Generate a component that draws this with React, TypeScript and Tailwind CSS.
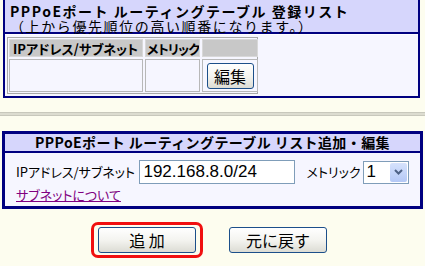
import React from 'react';

const jp = { fontFamily: '"Noto Sans CJK JP", "Liberation Sans", sans-serif' };
const sans = { fontFamily: '"Liberation Sans", sans-serif' };

function XpButton({ label, className = '' }: { label: string; className?: string }) {
  return (
    <button
      className={`flex items-center justify-center rounded-[3px] border border-[#1c4f8a] bg-gradient-to-b from-[#ffffff] via-[#f4f4f0] to-[#dcdcd4] text-[16px] leading-none text-black ${className}`}
      style={jp}
    >
      {label}
    </button>
  );
}

function ListPanel() {
  return (
    <div className="ml-[3px] mr-[5px] border-2 border-t-0 border-[#000080] bg-white">
      <div className="h-[34px] border-b-2 border-[#000080] bg-[#d6d6fc] px-[5px] pt-[4px] leading-[15px] whitespace-nowrap">
        <div className="text-[14px] font-bold tracking-[1.5px] text-black">PPPoEポート ルーティングテーブル 登録リスト</div>
        <div className="text-[14px] tracking-[1.6px] text-black">（上から優先順位の高い順番になります。）</div>
      </div>
      <div className="border-t border-white bg-[#f6f6ff] px-[2px] py-[2px]">
        <div className="w-[251px] border border-[#a8a8a8] p-[1px]">
          <div className="grid grid-cols-[134px_55px_56px] gap-[2px] whitespace-nowrap [font-feature-settings:'palt']">
            <div className="h-[18px] overflow-hidden border border-[#d8d8d8] bg-[#c8c8c8] px-[3px] text-[13px] font-bold leading-[17px]">IPアドレス/サブネット</div>
            <div className="h-[18px] overflow-hidden border border-[#d8d8d8] bg-[#c8c8c8] pl-[1px] text-[13px] font-bold leading-[17px] tracking-[-0.8px]">メトリック</div>
            <div className="h-[18px] border border-[#d8d8d8] bg-[#c8c8c8]" />
            <div className="h-[33px] border border-[#b8b8b8]" />
            <div className="h-[33px] border border-[#b8b8b8]" />
            <div className="flex h-[33px] items-center justify-center border border-[#b8b8b8]">
              <XpButton label="編集" className="h-[26px] w-[47px]" />
            </div>
          </div>
        </div>
      </div>
    </div>
  );
}

function EditPanel() {
  return (
    <div className="mx-[2px] border-[3px] border-[#000080] bg-[#f6f6ff]">
      <div className="h-[19px] border-b-2 border-[#000080] bg-[#d6d6fc] text-center text-[14px] font-bold leading-[17px] tracking-[0.4px] whitespace-nowrap">
        PPPoEポート ルーティングテーブル リスト追加・編集
      </div>
      <div className="px-[11px] pt-[7px] pb-[3px]">
        <div className="flex h-[24px] items-center whitespace-nowrap">
          <span className="w-[125px] text-[13px] [font-feature-settings:'palt']">IPアドレス/サブネット</span>
          <div className="flex h-[24px] w-[157px] items-center border border-[#7f9db9] bg-white px-[3px] text-[17px]" style={sans}>
            192.168.8.0/24
          </div>
          <span className="ml-[12px] text-[13px] [font-feature-settings:'palt']">メトリック</span>
          <div className="ml-[2px] flex h-[23px] w-[47px] items-center border border-[#7f9db9] bg-white pl-[3px] text-[17px]" style={sans}>
            <span className="flex-1">1</span>
            <span className="mr-[1px] flex h-[19px] w-[17px] items-center justify-center rounded-[2px] bg-gradient-to-b from-[#d6e2fc] to-[#b4c8f6]">
              <svg width="9" height="6" viewBox="0 0 9 6">
                <path d="M1 1 L4.5 4.5 L8 1" stroke="#4d6185" strokeWidth="2" fill="none" />
              </svg>
            </span>
          </div>
        </div>
        <div className="mt-[3px] text-[13px] leading-[16px] [font-feature-settings:'palt']">
          <a className="text-[#800080] underline">サブネットについて</a>
        </div>
      </div>
    </div>
  );
}

export default function App() {
  return (
    <div className="h-[266px] w-[425px] overflow-hidden bg-[#fdfdef] text-black" style={jp}>
      <ListPanel />
      <div className="mt-[14px] h-[4px] border-t border-b border-[#c8c8bc] bg-[#dcdcd0]" />
      <div className="mt-[15px]">
        <EditPanel />
      </div>
      <div className="mt-[13px] flex items-center gap-[26px] pl-[91px]">
        <div className="rounded-[7px] border-[3px] border-[#f01010] px-[4px] py-[2px]">
          <XpButton label="追 加" className="h-[26px] w-[98px]" />
        </div>
        <XpButton label="元に戻す" className="h-[26px] w-[98px]" />
      </div>
    </div>
  );
}
